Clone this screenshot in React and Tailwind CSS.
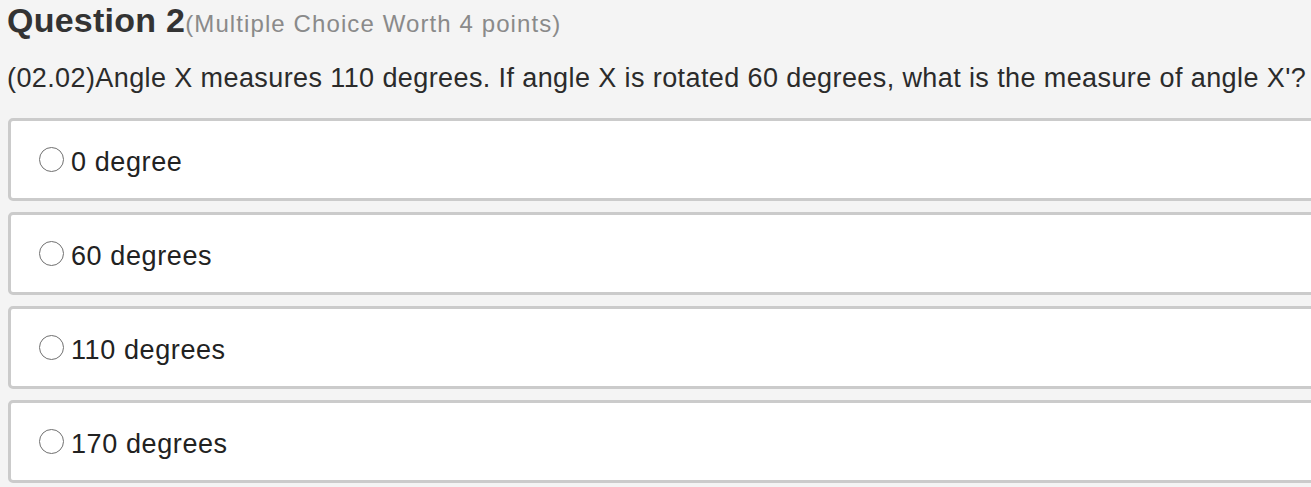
import React from "react";

const options = ["0 degree", "60 degrees", "110 degrees", "170 degrees"];

export default function App() {
  return (
    <div
      className="h-[487px] w-[1311px] overflow-hidden bg-[#f4f4f4] pl-[7px] text-[#2b2b2b]"
      style={{ fontFamily: '"Liberation Sans", Arial, sans-serif' }}
    >
      <div className="flex items-baseline pt-[1px] h-[40px]">
        <span className="text-[34px] font-bold leading-[38px] tracking-[0.25px] text-[#333]">
          Question 2
        </span>
        <span className="text-[24px] leading-[38px] tracking-[1.1px] text-[#8a8a8a]">
          (Multiple Choice Worth 4 points)
        </span>
      </div>
      <div className="mt-[20px] h-[36px] text-[27px] leading-[36px] tracking-[0.4px] whitespace-nowrap text-[#2b2b2b]">
        (02.02)Angle X measures 110 degrees. If angle X is rotated 60 degrees, what is the measure of angle X'?
      </div>
      <div className="mt-[22px] flex flex-col gap-[11px]">
        {options.map((o) => (
          <div
            key={o}
            className="ml-[1px] flex h-[83px] w-[1330px] items-center rounded-[5px] border-[3px] border-[#cbcbcb] bg-white pl-[28px]"
          >
            <span className="h-[25px] w-[25px] shrink-0 rounded-full border-[1.5px] border-[#707070] bg-white" />
            <span className="ml-[7px] mt-[4px] text-[27px] leading-[32px] tracking-[0.6px] text-[#222]">
              {o}
            </span>
          </div>
        ))}
      </div>
    </div>
  );
}
